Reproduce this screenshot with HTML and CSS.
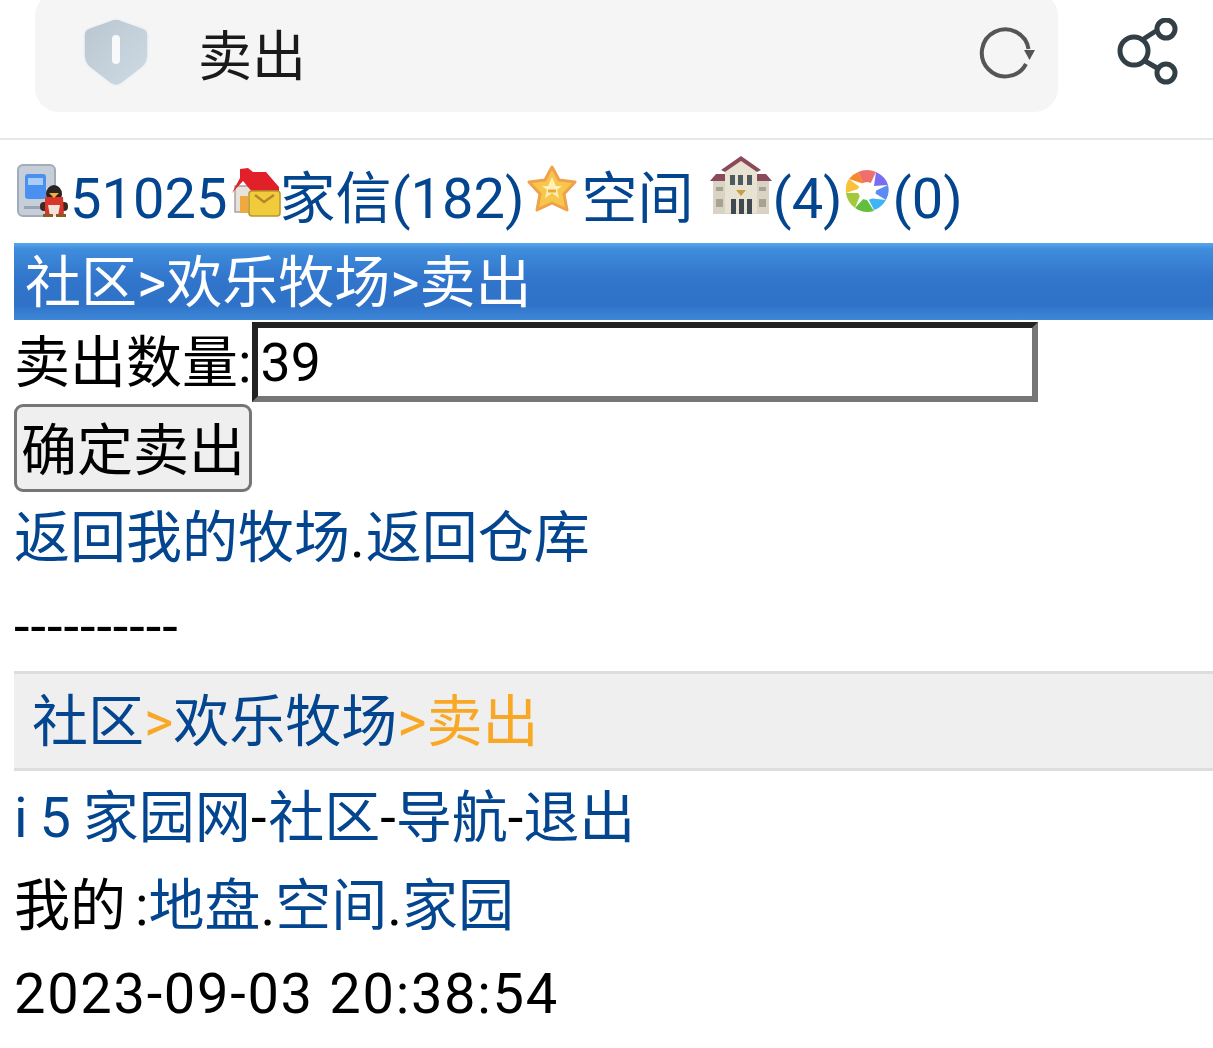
FILE: index.html
```html
<!DOCTYPE html>
<html lang="zh">
<head>
    <meta charset="UTF-8">
    <title>卖出</title>
    <link rel="stylesheet" href="styles.css">
</head>
<body>
    <div class="topbar">
        <div class="addr">
            <svg class="shield" width="66" height="70" viewBox="0 0 66 70">
                <defs>
                    <linearGradient id="sh" x1="0" y1="0" x2="1" y2="1">
                        <stop offset="0" stop-color="#b9c6d1"/>
                        <stop offset="1" stop-color="#cfdbe3"/>
                    </linearGradient>
                </defs>
                <path d="M33 2 Q36 2 39 3.500 L60 11 Q65 13 65 18 L65 38 Q65 45 60 50 L38 67 Q33 70 28 67 L6 50 Q1 45 1 38 L1 18 Q1 13 6 11 L27 3.500 Q30 2 33 2Z" fill="url(#sh)" stroke="#eef2f4" stroke-width="1.500"/>
                <rect x="29" y="18" width="8" height="29" rx="4" fill="#f7f9fa"/>
            </svg>
            <span class="addr-title">卖出</span>
            <svg class="reload" width="60" height="60" viewBox="0 0 60 60">
                <path d="M50.500 27 A23.500 23.500 0 1 0 48 42" fill="none" stroke="#555" stroke-width="4"/>
                <path d="M46 28 L57 28 L51.500 38Z" fill="#555"/>
            </svg>
        </div>
        <svg class="share" width="66" height="72" viewBox="0 0 66 72">
            <circle cx="22" cy="33" r="14" fill="none" stroke="#333f46" stroke-width="5"/>
            <circle cx="54" cy="11" r="9" fill="none" stroke="#333f46" stroke-width="5"/>
            <circle cx="54" cy="55" r="9" fill="none" stroke="#333f46" stroke-width="5"/>
            <path d="M33 20 L44 13 M33 43 L45 50" stroke="#333f46" stroke-width="5" stroke-linecap="round"/>
        </svg>
    </div>

    <div class="main">
        <div class="row first">
            <svg class="pic qq" width="52" height="54" viewBox="0 0 52 54">
                <rect x="1" y="1" width="37" height="51" rx="5" fill="#c6cfd9" stroke="#a0acb8" stroke-width="2"/>
                <rect x="8" y="10" width="21" height="25" rx="3" fill="#4a90f0"/>
                <rect x="11" y="14" width="15" height="7" fill="#a8cdf8"/>
                <rect x="7" y="42" width="20" height="3" fill="#98a4b0"/>
                <ellipse cx="37" cy="30" rx="8" ry="9" fill="#2b2320"/>
                <rect x="23" y="38" width="28" height="9" rx="4" fill="#3a2a20"/>
                <path d="M28 33 H46 L47 52 H28Z" fill="#d8352b"/>
                <path d="M32 29 H42 L37 34Z" fill="#f0b040"/>
                <path d="M31 41 H43 L41 52 H33Z" fill="#f4e3da"/>
                <rect x="26" y="50" width="10" height="3" fill="#8a5a22"/>
                <rect x="39" y="50" width="10" height="3" fill="#8a5a22"/>
            </svg><a href="#">51025</a><svg class="pic home" width="50" height="52" viewBox="0 0 50 52">
                <rect x="4" y="20" width="24" height="26" fill="#e6e2dc" stroke="#a9a39c" stroke-width="1.500"/>
                <path d="M1 27 L9 12 L9 3 L17 2 L22 6 L35 6 L48 21 L48 25 L22 27 L12 15Z" fill="#e2202a"/>
                <rect x="9" y="30" width="8" height="17" fill="#f0a840"/>
                <rect x="18" y="25" width="31" height="25" rx="3" fill="#f0cc3c" stroke="#b7962c" stroke-width="1.500"/>
                <path d="M24 29 L33 36 L43 29" fill="none" stroke="#b7862c" stroke-width="2.500"/>
            </svg><a href="#">家信(182)</a><svg class="pic star" width="50" height="47" viewBox="0 0 50 47">
                <path d="M25 2 L32 15 L48 17 L37 29 L40 45 L25 38 L10 45 L13 29 L2 17 L18 15Z" fill="#f7c64c" stroke="#f0a24a" stroke-width="3" stroke-linejoin="round"/>
                <path d="M25 12 L29 21 H35 L30 25 L32 33 L25 28 L18 33 L20 25 L15 21 H21Z" fill="#fff0b8"/>
                <path d="M21 26 H29" stroke="#e8a83c" stroke-width="3"/>
            </svg><a href="#">空间</a><svg class="pic bank" width="62" height="60" viewBox="0 0 62 60">
                <rect x="3" y="22" width="56" height="37" fill="#d8d3c4"/>
                <path d="M15 17 L31 6 L47 17 V58 H15Z" fill="#e8e2d2"/>
                <path d="M11 15 L31 1 L51 15 L47 17 L31 6 L15 17Z" fill="#8a4a5a"/>
                <path d="M0 26 L6 19 H15 V26Z M62 26 L56 19 H47 V26Z" fill="#8a4a5a"/>
                <rect x="20" y="20" width="5" height="10" fill="#4d5a60"/>
                <rect x="28" y="20" width="5" height="10" fill="#4d5a60"/>
                <rect x="37" y="20" width="5" height="10" fill="#4d5a60"/>
                <path d="M26 35 H36 L31 41Z" fill="#c9a040"/>
                <rect x="21" y="44" width="5" height="15" fill="#3f4a50"/>
                <rect x="29" y="44" width="5" height="15" fill="#3f4a50"/>
                <rect x="37" y="44" width="5" height="15" fill="#3f4a50"/>
                <rect x="6" y="32" width="7" height="4" fill="#a8a294"/>
                <rect x="49" y="32" width="7" height="4" fill="#a8a294"/>
                <rect x="6" y="44" width="7" height="8" fill="#a8a294"/>
                <rect x="49" y="44" width="7" height="8" fill="#a8a294"/>
            </svg><a href="#">(4)</a><svg class="pic lens" width="46" height="44" viewBox="0 0 46 44">
                <path d="M23 22 L14 3 Q23 -1 32 3Z" fill="#ef6f6f"/>
                <path d="M32 3 Q42 8 44 16 L30 17Z" fill="#7a6cf0"/>
                <path d="M44 16 Q46 24 42 31 L29 23Z" fill="#5a8cf5"/>
                <path d="M42 31 Q37 39 30 41 L24 29Z" fill="#3cb4f5"/>
                <path d="M30 42 Q20 45 11 39 L21 28Z" fill="#62bf3c"/>
                <path d="M11 39 Q3 33 2 24 L17 24Z" fill="#a4c83c"/>
                <path d="M2 24 Q1 15 5 10 L17 19Z" fill="#f9c23c"/>
                <path d="M5 10 Q9 5 14 3 L20 15Z" fill="#f58a2c"/>
                <circle cx="23" cy="22" r="9" fill="#fff"/>
            </svg><a href="#">(0)</a>
        </div>
        <div class="banner">社区&gt;欢乐牧场&gt;卖出</div>
        <div class="row form-row">卖出数量:<input class="num" type="text" value="39"></div>
        <div class="row"><button class="sell">确定卖出</button></div>
        <div class="row back"><a href="#">返回我的牧场</a><span class="dot">.</span><a href="#">返回仓库</a></div>
        <div class="row dash">----------</div>
        <div class="crumb"><a href="#">社区</a><span class="or">&gt;</span><a href="#">欢乐牧场</a><span class="or">&gt;卖出</span></div>
        <div class="row nav"><a class="site" href="#">i 5 家园网</a><span class="wide">-</span><a href="#">社区</a>-<a href="#">导航</a>-<a href="#">退出</a></div>
        <div class="row">我的<span class="colon">:</span><a href="#">地盘</a>.<a href="#">空间</a>.<a href="#">家园</a></div>
        <div class="row time">2023-09-03 20:38:54</div>
    </div>
</body>
</html>
```

FILE: styles.css
```css
html, body {
    margin: 0;
    padding: 0;
    background: #fff;
    overflow: hidden;
}
body {
    font-family: Roboto, "Noto Sans CJK SC", sans-serif;
    font-size: 56px;
    color: #000;
}
a {
    color: #03458f;
    text-decoration: none;
}
/* 顶部地址栏 */
.topbar {
    height: 138px;
    border-bottom: 2px solid #e4e8e8;
    display: flex;
    align-items: flex-start;
    padding-left: 35px;
    overflow: hidden;
}
.addr {
    width: 1023px;
    height: 120px;
    margin-top: -8px;
    background: #f5f5f5;
    border-radius: 24px;
    display: flex;
    align-items: center;
    padding-left: 48px;
    padding-right: 20px;
    box-sizing: border-box;
}
.shield {
    flex: none;
}
.addr-title {
    font-size: 54px;
    color: #1a1a1a;
    margin-left: 49px;
    flex: 1;
}
.share {
    margin-left: 54px;
    margin-top: 18px;
    flex: none;
}
.main {
    padding-left: 14px;
}
.row {
    height: 88px;
    line-height: 88px;
    white-space: nowrap;
}
.first {
    padding-top: 15px;
}
/* 小图标 */
.pic {
    vertical-align: 0;
    filter: blur(0.6px);
}
.qq {
    margin-left: 3px;
    margin-right: 1px;
}
.home {
    margin-left: 4px;
    margin-right: -2px;
}
.star {
    vertical-align: 6px;
    margin-left: 3px;
    margin-right: 4px;
}
.bank {
    margin-left: 17px;
    vertical-align: 3px;
}
.lens {
    margin-left: 1px;
    margin-right: 3px;
    vertical-align: 5px;
}
.banner {
    height: 77px;
    line-height: 80px;
    padding-left: 11px;
    color: #fff;
    background: linear-gradient(#58a6ee 0, #3f8cdc 8%, #3176cc 45%, #2f72c8 80%, #3e88d8 100%);
}
.form-row {
    height: 84px;
    line-height: 86px;
}
.num {
    width: 786px;
    height: 80px;
    box-sizing: border-box;
    padding: 0 3px;
    border: 6px solid;
    border-color: #222 #767676 #767676 #222;
    font-family: Roboto, sans-serif;
    font-size: 53.500px;
    vertical-align: top;
    margin-top: 2px;
    background: #fff;
    color: #000;
    outline: none;
    border-radius: 0;
}
.sell {
    width: 238px;
    height: 88px;
    padding: 5px 0 0;
    font-family: inherit;
    font-size: 56px;
    line-height: 78px;
    background: #efefef;
    color: #000;
    border: 3px solid #767676;
    border-radius: 9px;
    vertical-align: top;
}
.back {
    line-height: 92px;
}
.dot {
    margin-right: 1px;
}
.dash {
    height: 88px;
    padding-top: 3px;
    letter-spacing: 1px;
}
.crumb {
    height: 94px;
    line-height: 96px;
    padding-left: 18px;
    background: #efefef;
    border-top: 3px solid #ddd;
    border-bottom: 3px solid #ddd;
}
.or {
    color: #f9a825;
}
.nav {
    margin-top: 3px;
}
.site {
    word-spacing: -2px;
}
.wide {
    letter-spacing: 2px;
}
.colon {
    margin-left: 9px;
}
.time {
    letter-spacing: 1.700px;
}
```
